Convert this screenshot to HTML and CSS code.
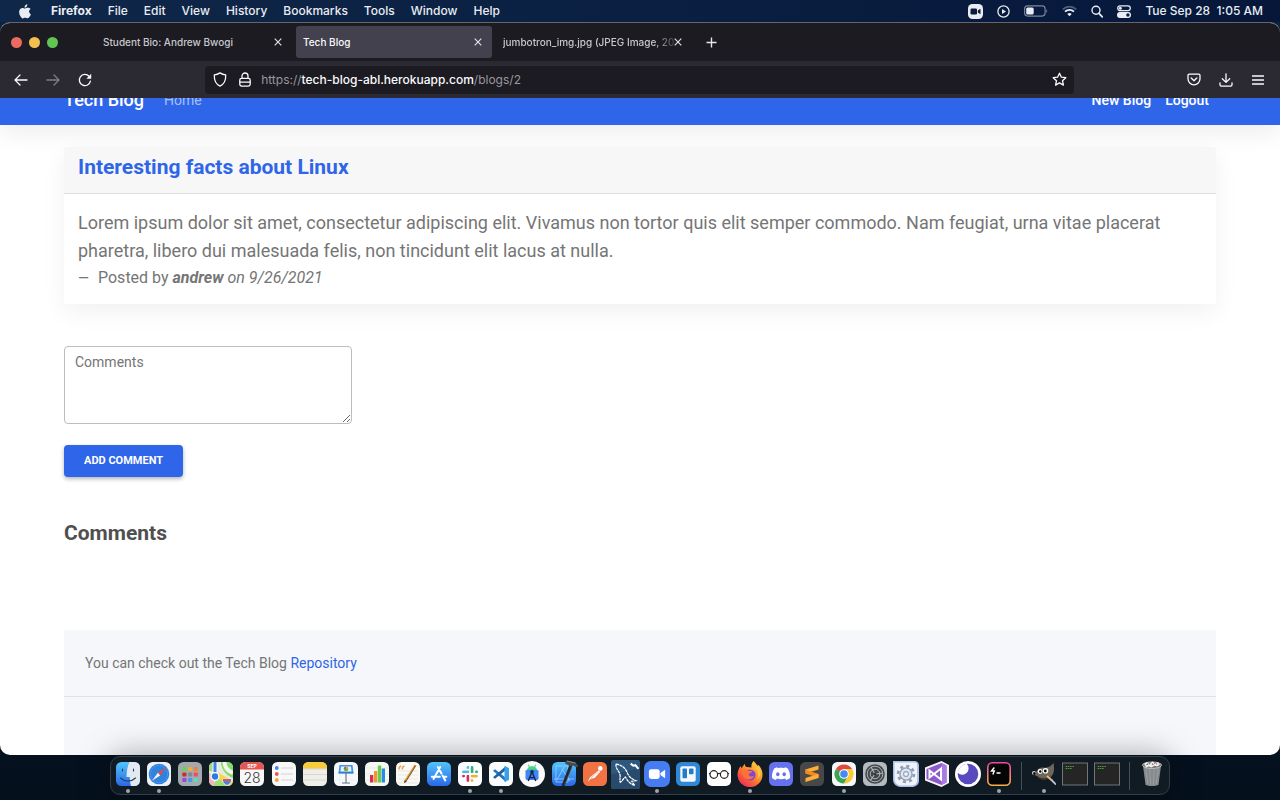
FILE: index.html
```html
<!DOCTYPE html>
<html lang="en">
<head>
<meta charset="utf-8">
<title>Tech Blog</title>
<link rel="stylesheet" href="styles.css">
</head>
<body>
<header class="menubar">
  <nav class="menus" aria-label="Menu bar">
    <svg class="apple" width="12" height="15" viewBox="0 0 12 15" fill="#e9edf3"><path d="M8.3 0.3c.1 1-.3 1.8-.8 2.4-.5.6-1.2 1-2 .9-.1-.9.3-1.700.8-2.300C6.800.7 7.600.3 8.300.3zM11.600 5.100c-1 .6-1.500 1.400-1.500 2.500 0 1.200.7 2.200 1.800 2.600-.3.900-.7 1.700-1.200 2.400-.6.9-1.200 1.700-2.200 1.700-.9 0-1.200-.5-2.300-.5s-1.400.5-2.300.6c-1 0-1.700-.9-2.300-1.800C.4 10.900-.4 8 .6 5.900c.6-1.300 1.700-2 2.800-2 1 0 1.700.6 2.600.6.8 0 1.500-.7 2.900-.7 1.100 0 2.100.5 2.700 1.300z"/></svg>
    <b>Firefox</b><span>File</span><span>Edit</span><span>View</span><span>History</span><span>Bookmarks</span><span>Tools</span><span>Window</span><span>Help</span>
  </nav>
  <div class="status">
    <svg width="15" height="15" viewBox="0 0 15 15"><rect width="15" height="15" rx="4.500" fill="#e9edf3"/><rect x="2.500" y="4.500" width="6.500" height="6" rx="1.300" fill="#0a1b3b"/><path d="M9.800 6.600l2.700-1.800v5.400L9.800 8.400z" fill="#0a1b3b"/></svg>
    <svg width="13" height="13" viewBox="0 0 13 13"><circle cx="6.500" cy="6.500" r="5.600" fill="none" stroke="#e9edf3" stroke-width="1.300"/><path d="M5 3.900l4 2.600-4 2.600z" fill="#e9edf3"/></svg>
    <svg width="24" height="12" viewBox="0 0 24 12"><rect x=".6" y=".9" width="20.500" height="10.200" rx="3" fill="none" stroke="#7b889f" stroke-width="1.100"/><rect x="2.200" y="2.500" width="7.500" height="7" rx="1.500" fill="#e9edf3"/><path d="M22.300 4.200c1.200.5 1.200 3.100 0 3.600z" fill="#7b889f"/></svg>
    <svg width="15" height="12" viewBox="0 0 15 12" fill="none" stroke-width="1.700"><path d="M.8 4.400a9.500 9.500 0 0 1 13.400 0" stroke="#4e5f7e"/><path d="M3 6.700a6.300 6.300 0 0 1 9 0" stroke="#e9edf3"/><path d="M7.500 11.300L5.300 9a3.200 3.200 0 0 1 4.400 0z" fill="#e9edf3"/></svg>
    <svg width="12" height="13" viewBox="0 0 12 13" fill="none" stroke="#e9edf3" stroke-width="1.400"><circle cx="5" cy="5.300" r="4"/><path d="M7.900 8.300l3.400 3.600" stroke-width="1.700" stroke-linecap="round"/></svg>
    <svg width="14" height="13" viewBox="0 0 14 13"><rect x=".7" y=".9" width="12.600" height="4.800" rx="2.400" fill="none" stroke="#e9edf3" stroke-width="1.200"/><circle cx="3.300" cy="3.300" r="1.500" fill="#e9edf3"/><rect y="7" width="14" height="5.900" rx="2.900" fill="#e9edf3"/><circle cx="10.900" cy="10" r="1.700" fill="#0a1b3b"/></svg>
    <time>Tue Sep 28&nbsp; 1:05 AM</time>
  </div>
</header>

<main class="window">
  <div class="tabstrip">
    <div class="lights"><button class="light red" aria-label="Close window"></button><button class="light yellow" aria-label="Minimise"></button><button class="light green" aria-label="Zoom"></button></div>
    <div class="tab"><span class="tab-title">Student Bio: Andrew Bwogi</span><button class="close" aria-label="Close tab"><svg width="8" height="8" viewBox="0 0 8 8"><path d="M.7.7l6.600 6.600M7.300.7L.7 7.300"/></svg></button></div>
    <div class="tab active"><span class="tab-title">Tech Blog</span><button class="close" aria-label="Close tab"><svg width="8" height="8" viewBox="0 0 8 8"><path d="M.7.7l6.600 6.600M7.300.7L.7 7.300"/></svg></button></div>
    <div class="tab"><span class="tab-title fade">jumbotron_img.jpg (JPEG Image, 20</span><button class="close" aria-label="Close tab"><svg width="8" height="8" viewBox="0 0 8 8"><path d="M.7.7l6.600 6.600M7.300.7L.7 7.300"/></svg></button></div>
    <button class="newtab" aria-label="New tab"><svg width="11" height="11" viewBox="0 0 11 11"><path d="M5.500.5v10M.5 5.500h10"/></svg></button>
  </div>

  <div class="toolbar">
    <button class="tool" aria-label="Back"><svg width="14" height="12" viewBox="0 0 14 12"><path d="M6 1L1 6l5 5M1.200 6H13"/></svg></button>
    <button class="tool dim" aria-label="Forward"><svg width="14" height="12" viewBox="0 0 14 12"><path d="M8 1l5 5-5 5M12.800 6H1"/></svg></button>
    <button class="tool" aria-label="Reload"><svg width="14" height="14" viewBox="0 0 14 14"><path d="M12.400 8.200A5.600 5.600 0 1 1 11 3.200"/><path d="M13.200.8v5H8.400z" fill="#fbfbfe" stroke="none"/></svg></button>
    <div class="spring"></div>
    <div class="urlbar">
      <svg width="14" height="15" viewBox="0 0 14 15"><path d="M7 .9c1.800 1.300 3.700 1.900 5.700 2 .2 4.700-1.500 9.300-5.700 11.200C2.800 12.200 1.100 7.600 1.300 2.900 3.300 2.800 5.200 2.200 7 .9z"/></svg>
      <svg width="12" height="15" viewBox="0 0 12 15"><rect x=".8" y="6.300" width="10.400" height="7.800" rx="1.800"/><path d="M3 6V4a3 3 0 0 1 6 0v2M1 10.200h10"/></svg>
      <div class="url" role="textbox" contenteditable="true" spellcheck="false" aria-label="Address">https://<strong>tech-blog-abl.herokuapp.com</strong>/blogs/2</div>
      <button class="star" aria-label="Bookmark this page"><svg width="15" height="15" viewBox="0 0 15 15"><path d="M7.500 1.200l1.900 4 4.400.5-3.300 3 .9 4.400-3.900-2.200-3.900 2.200.9-4.400-3.300-3 4.400-.5z"/></svg></button>
    </div>
    <div class="spring"></div>
    <button class="tool" aria-label="Save to Pocket"><svg width="14" height="13" viewBox="0 0 14 13"><path d="M2.300 1.200h9.400c.8 0 1.300.5 1.300 1.300v3.300a6 6 0 0 1-12 0V2.500c0-.8.5-1.300 1.300-1.300z"/><path d="M4.200 5L7 7.700 9.800 5"/></svg></button>
    <button class="tool" aria-label="Downloads"><svg width="14" height="14" viewBox="0 0 14 14"><path d="M7 .8v8.400M3.300 5.800L7 9.400l3.700-3.600M1 9.800v2c0 .8.500 1.300 1.300 1.300h9.400c.8 0 1.300-.5 1.300-1.300v-2"/></svg></button>
    <button class="tool" aria-label="Menu"><svg width="12" height="10" viewBox="0 0 12 10"><path d="M.5 1h11M.5 5h11M.5 9h11"/></svg></button>
  </div>

  <div class="viewport">
    <nav class="navbar">
      <a class="brand" href="#">Tech Blog</a>
      <a class="home" href="#">Home</a>
      <div class="actions"><a href="#">New Blog</a><a href="#">Logout</a></div>
    </nav>
    <div class="page">
      <article class="card">
        <h1 class="card-title">Interesting facts about Linux</h1>
        <div class="card-body">
          <p class="text">Lorem ipsum dolor sit amet, consectetur adipiscing elit. Vivamus non tortor quis elit semper commodo. Nam feugiat, urna vitae placerat pharetra, libero dui malesuada felis, non tincidunt elit lacus at nulla.</p>
          <p class="byline"><span class="dash">—</span>Posted by <em><b>andrew</b> on 9/26/2021</em></p>
        </div>
      </article>
      <form class="comment-form">
        <textarea class="comment-box" placeholder="Comments" aria-label="Comments"></textarea>
        <button class="submit" type="button">ADD COMMENT</button>
      </form>
      <h2 class="section-title">Comments</h2>
      <footer class="footer">
        <p class="footer-text">You can check out the Tech Blog <a href="#">Repository</a></p>
      </footer>
    </div>
  </div>
</main>

<div class="dock-area">
<div class="dock">
  <button class="app running" aria-label="Finder"><svg viewBox="0 0 24 24"><defs><linearGradient id="fb" x2="0" y2="1"><stop stop-color="#52c4fb"/><stop offset="1" stop-color="#2a68e8"/></linearGradient></defs><rect width="24" height="24" rx="5.500" fill="url(#fb)"/><path d="M13.500 0H18.500A5.500 5.500 0 0 1 24 5.500v13a5.500 5.500 0 0 1-5.500 5.500H15c-.8-2.500-1.100-5-1.200-9H10.500C10.600 9 11.500 4 13.500 0z" fill="#e4e8f0"/><path d="M6.500 7v2M17.500 7v2M4.500 16c4.500 4.200 10.500 4.200 15 0" stroke="#23405f" stroke-width="1.100" fill="none" stroke-linecap="round"/></svg></button>
  <button class="app running" aria-label="Safari"><svg viewBox="0 0 24 24"><rect width="24" height="24" rx="5.500" fill="#eef0f2"/><circle cx="12" cy="12" r="10.300" fill="#2f83df"/><circle cx="12" cy="12" r="8.600" fill="none" stroke="#6fb2ee" stroke-width="1" stroke-dasharray=".6 1"/><path d="M19 5.500l-5.800 7.900-2.300-2.600z" fill="#ea4a3d"/><path d="M5 18.700l5.900-7.900 2.300 2.600z" fill="#f2f4f7"/></svg></button>
  <button class="app" aria-label="Launchpad"><svg viewBox="0 0 24 24"><rect width="24" height="24" rx="5.500" fill="#a4a9b0"/><g><rect x="4.300" y="5" width="4.200" height="4" rx="1" fill="#63d84a"/><rect x="10" y="5" width="4.200" height="4" rx="1" fill="#f3a93b"/><rect x="15.700" y="5" width="4.200" height="4" rx="1" fill="#f08430"/><rect x="4.300" y="10.500" width="4.200" height="4" rx="1" fill="#c5302d"/><rect x="10" y="10.500" width="4.200" height="4" rx="1" fill="#818a93"/><rect x="15.700" y="10.500" width="4.200" height="4" rx="1" fill="#f14c5c"/><rect x="4.300" y="16" width="4.200" height="4" rx="1" fill="#a044dc"/><rect x="10" y="16" width="4.200" height="4" rx="1" fill="#3f9bf2"/><rect x="15.700" y="16" width="4.200" height="4" rx="1" fill="#5bdcb5"/></g></svg></button>
  <button class="app" aria-label="Maps"><svg viewBox="0 0 24 24"><defs><clipPath id="mc"><rect width="24" height="24" rx="5.500"/></clipPath></defs><g clip-path="url(#mc)"><rect width="24" height="24" fill="#e9eadf"/><path d="M12 0h12v16C18 14 12 8 12 0z" fill="#83dd66"/><path d="M15.500 0c0 6 3.500 9 8.500 11" stroke="#f4f5ef" stroke-width="4" fill="none"/><path d="M8 10l16 9v5h-8L7 15z" fill="#f8d34d"/><path d="M8 15l10 9H4z" fill="#9ede7a"/><path d="M0 11l5 3v10H0z" fill="#f0b4bb"/><path d="M0 0h4v9H0z" fill="#a8d884"/><path d="M6 0v16" stroke="#f5f6f8" stroke-width="5"/><path d="M6 0v14" stroke="#3683ec" stroke-width="3"/><circle cx="6" cy="14.500" r="3.900" fill="#2e78e8" stroke="#fff" stroke-width="1.300"/><path d="M14 17h8c.8 3-.5 5-4 6.500-3.500-1.500-4.800-3.500-4-6.500z" fill="#4b82df" stroke="#eef1fa" stroke-width=".8"/><path d="M14 17h8v2h-8z" fill="#da5754"/></g></svg></button>
  <button class="app" aria-label="Calendar"><svg viewBox="0 0 24 24"><rect width="24" height="24" rx="5.500" fill="#f7f7f7"/><path d="M0 7.500v-2A5.500 5.500 0 0 1 5.500 0h13A5.500 5.500 0 0 1 24 5.500v2z" fill="#e45750"/><text x="12" y="6" class="cal-month">SEP</text><text x="12" y="20.500" class="cal-day">28</text></svg></button>
  <button class="app" aria-label="Reminders"><svg viewBox="0 0 24 24"><rect width="24" height="24" rx="5.500" fill="#f8f8f8"/><path d="M9 6h12M9 12h12M9 18h12" stroke="#c8c8c8" stroke-width=".8"/><circle cx="4.800" cy="6" r="1.900" fill="#3e83f7"/><circle cx="4.800" cy="12" r="1.900" fill="#ee5446"/><circle cx="4.800" cy="18" r="1.900" fill="#f2a03d"/></svg></button>
  <button class="app" aria-label="Notes"><svg viewBox="0 0 24 24"><rect width="24" height="24" rx="5.500" fill="#efeee9"/><path d="M0 6.500v-1A5.500 5.500 0 0 1 5.500 0h13A5.500 5.500 0 0 1 24 5.500v1z" fill="#f8cb3c"/><path d="M0 7h24" stroke="#b8af9c" stroke-width=".7" stroke-dasharray=".8 .8"/><path d="M0 12.500h24M0 18h24" stroke="#cfcec9" stroke-width=".7"/></svg></button>
  <button class="app" aria-label="Keynote"><svg viewBox="0 0 24 24"><rect width="24" height="24" rx="5.500" fill="#f7f9fb"/><path d="M0 6h24M0 12h24M0 18h24M6 0v24M18 0v24" stroke="#e1e8f0" stroke-width=".5"/><path d="M5.500 3h13l1 8H4.500z" fill="#3a97ed"/><path d="M7 4.500h10l.5 5h-11z" fill="#e9f4fd"/><path d="M4.500 11h15" stroke="#1667bd"/><circle cx="12" cy="7" r="2.300" fill="#52b85c"/><path d="M12 7V4.700A2.300 2.300 0 0 1 14.300 7z" fill="#f39a35"/><path d="M12 7H9.700A2.300 2.300 0 0 1 12 4.700z" fill="#e4465b"/><path d="M12 11v9.500M8 21h8" stroke="#66717c" stroke-width="1.100"/></svg></button>
  <button class="app" aria-label="Numbers"><svg viewBox="0 0 24 24"><rect width="24" height="24" rx="5.500" fill="#f6f8f4"/><path d="M0 6h24M0 12h24M0 18h24" stroke="#dbe3d8" stroke-width=".5"/><path d="M5 13h3.300v7.500H5z" fill="#d63149"/><path d="M9 9h3.300v11.500H9z" fill="#ef9638"/><path d="M12.800 3.500h3.400v17h-3.400z" fill="#67cf47"/><path d="M16.700 6.500h3.300v14h-3.300z" fill="#2f87ea"/></svg></button>
  <button class="app" aria-label="Pages"><svg viewBox="0 0 24 24"><rect width="24" height="24" rx="5.500" fill="#faf9f5"/><path d="M2 9h20M2 13h20M2 17h20M2 21h20" stroke="#dfddd7" stroke-width=".6"/><path d="M3.200 7.500c-.5-1.500.2-3 2-3.500M6.500 7.500C6 6 6.700 4.500 8.500 4" stroke="#f19a4a" stroke-width="1.500" fill="none"/><path d="M18.500 2.500l1.800 1.300L10.500 19.500l-2.300 1.600.4-2.800z" fill="#ed962f"/><path d="M19.800 3.500L10 19.200" stroke="#665e55" stroke-width="1"/><path d="M8.200 21.200l.4-3 2 1.300z" fill="#343434"/></svg></button>
  <button class="app" aria-label="App Store"><svg viewBox="0 0 24 24"><rect width="24" height="24" rx="5.500" fill="url(#fb)"/><g stroke="#fff" stroke-width="2" stroke-linecap="round"><path d="M13.200 5L6.500 17M10.800 5l3.700 6.500M15.500 13.500l2.800 5M4.800 14.800h8M16.500 14.800h2.800"/></g></svg></button>
  <button class="app running" aria-label="Slack"><svg viewBox="0 0 24 24"><rect width="24" height="24" rx="5.500" fill="#fff"/><g stroke-width="2.900" stroke-linecap="round"><path d="M10 5.500v.1M5.500 9.900H10" stroke="#43bfe9"/><path d="M14 5.500v4.400M18.500 9.900h.1" stroke="#3aad7d"/><path d="M14 14.100h4.500M14 18.400v.1" stroke="#e7b43a"/><path d="M10 14.100v4.400M5.500 14.100h.1" stroke="#d92b61"/></g><path d="M11.900 4v15.900M4 12h16" stroke="#fff" stroke-width="1"/></svg></button>
  <button class="app running" aria-label="Visual Studio Code"><svg viewBox="0 0 24 24"><rect width="24" height="24" rx="5.500" fill="#fafbfc"/><path d="M4 8.700L6 7.200 17 16v4z" fill="#2173bb"/><path d="M4 15.300l2 1.500L17 8V4z" fill="#1b62a5"/><path d="M15.500 4l4.500 2v12l-4.500 2z" fill="#38a1ec"/></svg></button>
  <button class="app" aria-label="Android Studio"><svg class="large" viewBox="0 0 24 24"><circle cx="12" cy="12" r="12" fill="#fafafa"/><path d="M7.500 8.500c0-5 9-5 9 0z" fill="#43d77f"/><path d="M8.500 3.500l1.200 2M15.500 3.500l-1.200 2" stroke="#43d77f"/><rect x="6" y="8" width="12" height="9.500" rx="1.500" fill="#4285f4"/><path d="M12 10l-3.500 8.500M12 10l3.500 8.500M9.500 14.500c1.500 1.200 3.500 1.200 5 0" stroke="#162647" stroke-width="1.300" fill="none"/><circle cx="12" cy="10" r="1.600" fill="#162647"/></svg></button>
  <button class="app" aria-label="Xcode"><svg viewBox="0 0 24 24" overflow="visible"><rect width="24" height="24" rx="5.500" fill="url(#fb)"/><path d="M4 4h12v16H4zM2 17h20M12 5L5 18M10 7l8 12" stroke="#a5d8ff" stroke-width="1" fill="none" opacity=".7"/><path d="M19 3L11 24" stroke="#23272c" stroke-width="3"/><path d="M20 5L12.500 23" stroke="#555c63" stroke-width=".7"/><path d="M14-1.500l9.500 2 3 3.500-2 1.500-3-2-2.500 1-6-3z" fill="#454b52"/><path d="M15-1l8.500 2" stroke="#868d94"/></svg></button>
  <button class="app" aria-label="Postman"><svg viewBox="0 0 24 24"><rect width="24" height="24" rx="5.500" fill="#f17344"/><circle cx="17.300" cy="6.400" r="2.300" fill="#fff"/><path d="M15.800 8.200l1.500 1.500L11.500 16l-3.700.8-3 3 2.200-4.500z" fill="#fff"/><path d="M15.200 9.500L8 16" stroke="#f5a080" stroke-width=".7"/></svg></button>
  <button class="app" aria-label="MySQL Workbench"><svg class="xlarge" viewBox="0 0 28 28"><rect width="28" height="28" rx="2" fill="#2f587f"/><path d="M0 14l28-6v18a2 2 0 0 1-2 2H2a2 2 0 0 1-2-2z" fill="#284a6c"/><path d="M5 4c6 1 9 4 11 9 2 4 4 5 8 7l-4 .5 3 4c-4-1-7-4-9-8-2 1-3 4-5 5-1-3 .5-5-.5-8C7.500 10 4 8 5 4z" fill="none" stroke="#fff" stroke-width="1.200" stroke-dasharray="3 .5"/><path d="M19 3.500l2.500 2 2-.5 3 3.500" stroke="#fff" stroke-width="2" fill="none"/></svg></button>
  <button class="app running" aria-label="Zoom"><svg class="large" viewBox="0 0 24 24"><rect width="24" height="24" rx="6.500" fill="#467cf2"/><rect x="4.500" y="7.500" width="10" height="9" rx="2.200" fill="#fff"/><path d="M15.200 11l4.300-3v8l-4.300-3z" fill="#fff"/></svg></button>
  <button class="app" aria-label="Trello"><svg viewBox="0 0 24 24"><rect width="24" height="24" rx="5.500" fill="#3087d5"/><rect x="4.300" y="4.300" width="15.400" height="15.400" rx="2" fill="#f4f8fc"/><rect x="6.500" y="6.500" width="4.500" height="9.700" rx=".8" fill="#277bc5"/><rect x="13" y="6.500" width="4.500" height="5.800" rx=".8" fill="#277bc5"/></svg></button>
  <button class="app" aria-label="Glasses"><svg viewBox="0 0 24 24"><rect width="24" height="24" rx="5" fill="#fff"/><g fill="none" stroke="#242424" stroke-width="1.200"><circle cx="6.800" cy="12.500" r="3.800"/><circle cx="17.200" cy="12.500" r="3.800"/><path d="M10.500 12c.9-1 2.100-1 3 0M3.200 11.700L2 11.300M20.800 11.700l1.200-.4"/></g></svg></button>
  <button class="app running" aria-label="Firefox"><svg class="large" viewBox="0 0 26 26"><defs><linearGradient id="ff" x1="1" y1="0" x2=".2" y2="1"><stop stop-color="#ffe14b"/><stop offset=".5" stop-color="#ff8b2c"/><stop offset="1" stop-color="#ef2655"/></linearGradient></defs><path d="M16.500 0c1.800 2 3 3 4.200 5l.5-1.300c3 3 4.300 6.300 4.300 9.600A12.500 12.500 0 0 1 .5 14c0-3.300 1-6.500 3.200-9l.8 2.300L7.700 2.700c.2 1.800.7 2.600 1.800 3.300l5 .4c-.5-2.500.5-4.700 2-6.400z" fill="url(#ff)"/><circle cx="13" cy="14" r="5.600" fill="#8146d4"/><path d="M4.500 8.500c4-1 6.200 0 7 1.500h4c-.5 2-3.500 2-4 3 0 2.500 3 3.200 5.500 1.700-1 3.800-6 5-9 2.500-2-2-3-5-3.500-8.700z" fill="#ff7334"/><path d="M18 7c3.500 2 4.200 8 1.200 12 5-3 5.500-9 2-13z" fill="#ffc342"/></svg></button>
  <button class="app" aria-label="Discord"><svg viewBox="0 0 24 24"><rect width="24" height="24" rx="5.500" fill="#6571ef"/><path d="M8.700 6.200c2.200-.5 4.400-.5 6.600 0l.6-.9c1 .2 2 .6 2.900 1.100 1.800 3 2.500 6.300 2.200 9.700-1.300 1-2.600 1.600-3.900 2l-1-1.700c-2.700 1-5.500 1-8.200 0l-1 1.700c-1.300-.4-2.600-1-3.900-2-.3-3.400.4-6.700 2.200-9.700.9-.5 1.900-.9 2.900-1.100z" fill="#fff"/><ellipse cx="8.800" cy="12.300" rx="1.700" ry="2" fill="#6571ef"/><ellipse cx="15.200" cy="12.300" rx="1.700" ry="2" fill="#6571ef"/></svg></button>
  <button class="app" aria-label="Sublime Text"><svg viewBox="0 0 24 24"><rect width="24" height="24" rx="5.500" fill="#484848"/><path d="M5.500 7.500l13-4v4l-13 4z" fill="#ffae38"/><path d="M5.500 7.500l13 4.500v4l-13-4.500z" fill="#f48b22"/><path d="M5.500 16l13-4v4l-13 4z" fill="#ffae38"/></svg></button>
  <button class="app running" aria-label="Chrome"><svg viewBox="0 0 24 24"><rect width="24" height="24" rx="5.500" fill="#f7f7f7"/><path d="M12 12L3.770 7.250A9.500 9.500 0 0 1 20.230 7.250H12z" fill="#df4b3f"/><path d="M12 12L3.770 7.250A9.500 9.500 0 0 0 12 21.500l4-7z" fill="#37a554"/><path d="M12 7.250h8.230A9.500 9.500 0 0 1 12 21.500l4.200-7z" fill="#fbc934"/><circle cx="12" cy="12" r="4.800" fill="#fff"/><circle cx="12" cy="12" r="3.800" fill="#4689f2"/></svg></button>
  <button class="app" aria-label="System Preferences"><svg viewBox="0 0 24 24"><rect width="24" height="24" rx="5.500" fill="#b4babd"/><circle cx="12" cy="12" r="9.800" fill="#43474b"/><circle cx="12" cy="12" r="7.800" fill="none" stroke="#a9afb3" stroke-width="1"/><circle cx="12" cy="12" r="4.800" fill="none" stroke="#b2b7ba" stroke-width="1"/><path d="M12 12l8-1M12 12l-4.700 6.500M12 12L8 5" stroke="#b2b7ba" stroke-width="1.200"/><circle cx="12" cy="12" r="1.500" fill="#33373a"/></svg></button>
  <button class="app" aria-label="Automation"><svg class="large" viewBox="0 0 24 24"><path d="M0 0h20a4 4 0 0 1 4 4v14c0 4-3 6-7 6H8c-5 0-8-3-8-7z" fill="#a9bfe6"/><path d="M1.300 1.300h18.500a2.500 2.500 0 0 1 2.500 2.500V18c0 2.800-2 4.500-4.500 4.500H8c-4 0-6.500-2-6.500-6z" fill="#f0f3fa"/><circle cx="12" cy="12" r="7.300" fill="none" stroke="#8e9fb9" stroke-width="2.500" stroke-dasharray="2.800 2.933"/><circle cx="12" cy="12" r="5.600" fill="#dfe4ee" stroke="#8e9fb9" stroke-width="1.200"/><circle cx="12" cy="12" r="2.200" fill="#f5f7fb" stroke="#8e9fb9"/></svg></button>
  <button class="app" aria-label="Visual Studio"><svg class="large" viewBox="0 0 26 26"><path d="M17.500 0L25 4v18l-7.500 4L1 19.500v-13z" fill="#f7f4fb"/><path d="M17.500 2l5 2.500v17l-5 2.500L2.500 18V8z" fill="#8b5bc9"/><path d="M17.500 2l5 2.500v17l-5 2.500z" fill="#aa7be3"/><path d="M5.500 9.500v7L17 7.500v11L5.500 9.500z" fill="none" stroke="#fff" stroke-width="2"/></svg></button>
  <button class="app" aria-label="Insomnia"><svg class="large" viewBox="0 0 24 24"><circle cx="12" cy="12" r="12" fill="#fff"/><circle cx="12" cy="12" r="9.500" fill="#5849be"/><path d="M2.600 11A9.500 9.500 0 0 1 10.800 2.600a5.300 5.300 0 1 1-8.200 8.400z" fill="#fff"/></svg></button>
  <button class="app running" aria-label="Hyper"><svg viewBox="0 0 24 24"><defs><linearGradient id="hy" x2="0" y2="1"><stop stop-color="#f048a5"/><stop offset="1" stop-color="#f8ad42"/></linearGradient></defs><rect x=".8" y=".8" width="22.400" height="22.400" rx="4.500" fill="#050505" stroke="url(#hy)" stroke-width="1.600"/><path d="M7.300 5.500L4.500 9h2.800l-1.500 3.500M9.500 11h4" stroke="#fff" stroke-width="1.400" fill="none"/></svg></button>
  <span class="divider"></span>
  <button class="app running" aria-label="GIMP"><svg viewBox="0 0 24 24"><path d="M21.500 1c1 6 1 10-2.500 14-4 3.500-10 3-14-1-1.500 0-3-1-3.500-2.500 0-1.500 1-2.500 3-2C6 6.500 8.500 5 11.500 5.500c4 .8 7-1 10-4.500z" fill="#6d675b"/><path d="M5 14c4 3 10 3 14-1-2 6-11 7-14 1z" fill="#3d3932"/><ellipse cx="1.800" cy="11" rx="1.800" ry="2" fill="#d5d5d2"/><ellipse cx="2.300" cy="11.500" rx="1.300" ry="1.500" fill="#111"/><circle cx="8" cy="9.500" r="2.400" fill="#fff"/><circle cx="13.500" cy="8.800" r="2.800" fill="#fff"/><circle cx="8.300" cy="9.500" r="1.200"/><circle cx="13.300" cy="9" r="1.400"/><path d="M15 14l5 4.500" stroke="#e9b684" stroke-width="2"/><path d="M19.500 18l4.500 4.500" stroke="#b2c5db" stroke-width="1.800"/></svg></button>
  <button class="app" aria-label="Terminal window"><svg class="wide" viewBox="0 0 26 24"><rect x=".5" y="1" width="25" height="22" fill="#252525" stroke="#717578"/><path d="M3.500 4.500h9M3.500 6.500h7" stroke="#439c48" stroke-width="1.100" stroke-dasharray="1.600 .7"/></svg></button>
  <button class="app" aria-label="Terminal window"><svg class="wide" viewBox="0 0 26 24"><rect x=".5" y="1" width="25" height="22" fill="#252525" stroke="#717578"/><path d="M3.500 4.500h9M3.500 6.500h7" stroke="#439c48" stroke-width="1.100" stroke-dasharray="1.600 .7"/></svg></button>
  <span class="divider"></span>
  <button class="app" aria-label="Trash"><svg class="large" viewBox="0 0 24 28"><path d="M2 3l3 22.500c3 2 11 2 14 0L22 3z" fill="#85898b"/><path d="M5 5l2.500 20M9.500 5l1 21M14.500 5l-1 21M19 5l-2.500 20" stroke="#b4b8ba" stroke-width="1" opacity=".5"/><ellipse cx="12" cy="4.500" rx="10.300" ry="3.500" fill="#6f7375" stroke="#d1d4d5" stroke-width=".8"/><path d="M3.500 3l3-2 3 2 3-2.500 3 2 3-1.500 2 3-3 2-3-1-3 2-3-1-3 1z" fill="#efefed"/><path d="M6 4l2-1M12 3l1.500 1M16.500 3.500l1-.7" stroke="#b9483d" stroke-width="1.200"/><path d="M9 2.500l1 .8M14.500 2l.8.800" stroke="#417a5f" stroke-width="1.200"/></svg></button>
</div>
</div>
</body>
</html>
```

FILE: styles.css
```css
* { box-sizing: border-box; }
body {
  margin: 0;
  height: 100vh;
  display: flex;
  flex-direction: column;
  overflow: hidden;
  background: linear-gradient(#0c2241, #04101c);
  font-family: Roboto, "Liberation Sans", sans-serif;
}
button { border: 0; padding: 0; background: none; font: inherit; color: inherit; }
svg { display: block; flex: none; }
a { text-decoration: none; }
h1, h2, p { margin: 0; }

.menubar {
  display: flex;
  align-items: center;
  justify-content: space-between;
  flex: none;
  height: 22px;
  padding: 0 17px 0 19px;
  background: linear-gradient(90deg, #0f2748, #0b2143 40%, #06173a);
  color: #e9edf3;
  font: 500 12px/20px Inter, "Liberation Sans", sans-serif;
}
.menus { display: flex; align-items: center; gap: 16px; }
.menus b { font-weight: 700; padding-left: 4px; }
.status { display: flex; align-items: center; gap: 14px; }

.window {
  flex: 1;
  min-height: 0;
  display: flex;
  flex-direction: column;
  overflow: hidden;
  border-top: 1px solid #65656b;
  border-radius: 10px;
  background: #fff;
}
.tabstrip {
  display: flex;
  align-items: center;
  flex: none;
  gap: 4px;
  height: 38px;
  background: #1c1b22;
  color: #c8c8cc;
  font: 500 10px/16px Inter, "Liberation Sans", sans-serif;
}
.lights { display: flex; gap: 7px; width: 92px; padding-left: 11px; }
.light { width: 11px; height: 11px; border-radius: 50%; }
.red { background: #ed6a5e; }
.yellow { background: #f5bf4f; }
.green { background: #61c554; }
.tab {
  display: flex;
  align-items: center;
  justify-content: space-between;
  width: 196px;
  height: 32px;
  padding: 0 10px 0 7px;
  border-radius: 3px;
}
.tab.active { background: #42414d; color: #fbfbfe; }
.tab-title { white-space: nowrap; }
.fade { mask-image: linear-gradient(90deg, #000 88%, rgba(0, 0, 0, .2)); }
.close svg, .newtab svg { fill: none; stroke: #e6e6ea; stroke-width: 1.1; }
.newtab { padding: 0 10px; }
.newtab svg { stroke-width: 1.4; }

.toolbar {
  display: flex;
  align-items: center;
  flex: none;
  height: 37px;
  padding: 0 6px 0 5px;
  background: #2b2a33;
}
.tool { display: flex; justify-content: center; width: 32px; }
.toolbar svg {
  fill: none;
  stroke: #fbfbfe;
  stroke-width: 1.3;
  stroke-linecap: round;
  stroke-linejoin: round;
}
.dim { opacity: .4; }
.spring { flex: 5; }
.urlbar {
  flex: 41;
  display: flex;
  align-items: center;
  gap: 12px;
  height: 28px;
  padding: 0 7px 0 8px;
  border-radius: 4px;
  background: #1c1b22;
}
.url {
  flex: 1;
  margin-left: -2px;
  color: #98979f;
  font: 400 12px/18px Inter, "Liberation Sans", sans-serif;
}
.url strong { color: #fbfbfe; font-weight: 500; }

.viewport { flex: 1; min-height: 0; overflow: hidden; color: #757575; }
.navbar {
  display: flex;
  align-items: center;
  height: 51px;
  margin-top: -24px;
  padding: 0 5%;
  background: #2f65e9;
  box-shadow: 0 8px 24px rgba(0, 0, 0, .07);
  font-size: 14px;
  font-weight: 500;
}
.brand { margin-right: 20px; color: #fff; font-size: 18px; }
.home { color: #a5bff6; font-weight: 400; }
.actions { display: flex; gap: 14px; margin-left: auto; padding-right: 7px; }
.actions a { color: #fff; }

.page { padding: 22px 5% 0; }
.card { border-radius: 3px; box-shadow: 0 8px 24px rgba(0, 0, 0, .06); }
.card-title {
  padding: 4px 14px 10px;
  border-bottom: 1px solid #dfdfdf;
  border-radius: 3px 3px 0 0;
  background: #f7f7f7;
  color: #2f65e9;
  font-size: 21px;
  line-height: 32px;
  font-weight: 700;
}
.card-body { padding: 15px 14px 13px; }
.text { font-size: 18px; line-height: 28px; }
.byline { font-size: 16px; line-height: 26px; }
.dash { display: inline-block; width: 20px; font-size: 14px; }

.comment-form { display: flex; flex-direction: column; align-items: flex-start; gap: 21px; padding-top: 42px; }
.comment-box {
  display: block;
  width: 25%;
  height: 78px;
  padding: 5px 10px;
  border: 1px solid #bdbdbd;
  border-radius: 4px;
  background: #fff;
  font: 400 14px/20px Roboto, "Liberation Sans", sans-serif;
}
.comment-box::placeholder { color: #757575; }
.submit {
  padding: 0 20px;
  border-radius: 4px;
  background: #2f65e9;
  box-shadow: 0 2px 4px rgba(0, 0, 0, .3);
  color: #fff;
  font-size: 11px;
  line-height: 32px;
  font-weight: 700;
}
.section-title { padding-top: 40px; color: #4f4f4f; font-size: 21px; line-height: 32px; font-weight: 700; }
.footer { height: 260px; margin-top: 81px; background: #f5f7fb; }
.footer-text { padding: 22px 21px; border-bottom: 1px solid #dee1e6; font-size: 14px; line-height: 22px; }
.footer-text a { color: #2f65e9; }

.dock-area {
  position: relative;
  z-index: 1;
  flex: none;
  display: flex;
  justify-content: center;
  padding: 1px 0 5px;
}
.dock {
  display: flex;
  justify-content: space-between;
  align-items: flex-start;
  width: 1060px;
  height: 39px;
  padding: 5px;
  border: 1px solid #343d46;
  border-radius: 10px;
  background: #111b24;
  box-shadow: 0 0 32px rgba(0, 0, 0, .35);
}
.app { position: relative; display: flex; align-items: center; justify-content: center; width: 24px; height: 24px; }
.app svg { width: 24px; height: 24px; }
.app .large { width: 26px; height: 26px; }
.app .wide { width: 26px; height: 24px; }
.app .xlarge { width: 29px; height: 29px; }
.running::after {
  content: "";
  position: absolute;
  bottom: -7px;
  left: 10px;
  width: 4px;
  height: 4px;
  border-radius: 50%;
  background: #a0a5aa;
}
.divider { width: 1px; height: 28px; margin: 0 3px; background: #47505a; }
.cal-month, .cal-day { font-family: Inter, sans-serif; text-anchor: middle; }
.cal-month { font-size: 5px; font-weight: 700; fill: #fff; }
.cal-day { font-size: 14px; font-weight: 300; fill: #333; }
```
